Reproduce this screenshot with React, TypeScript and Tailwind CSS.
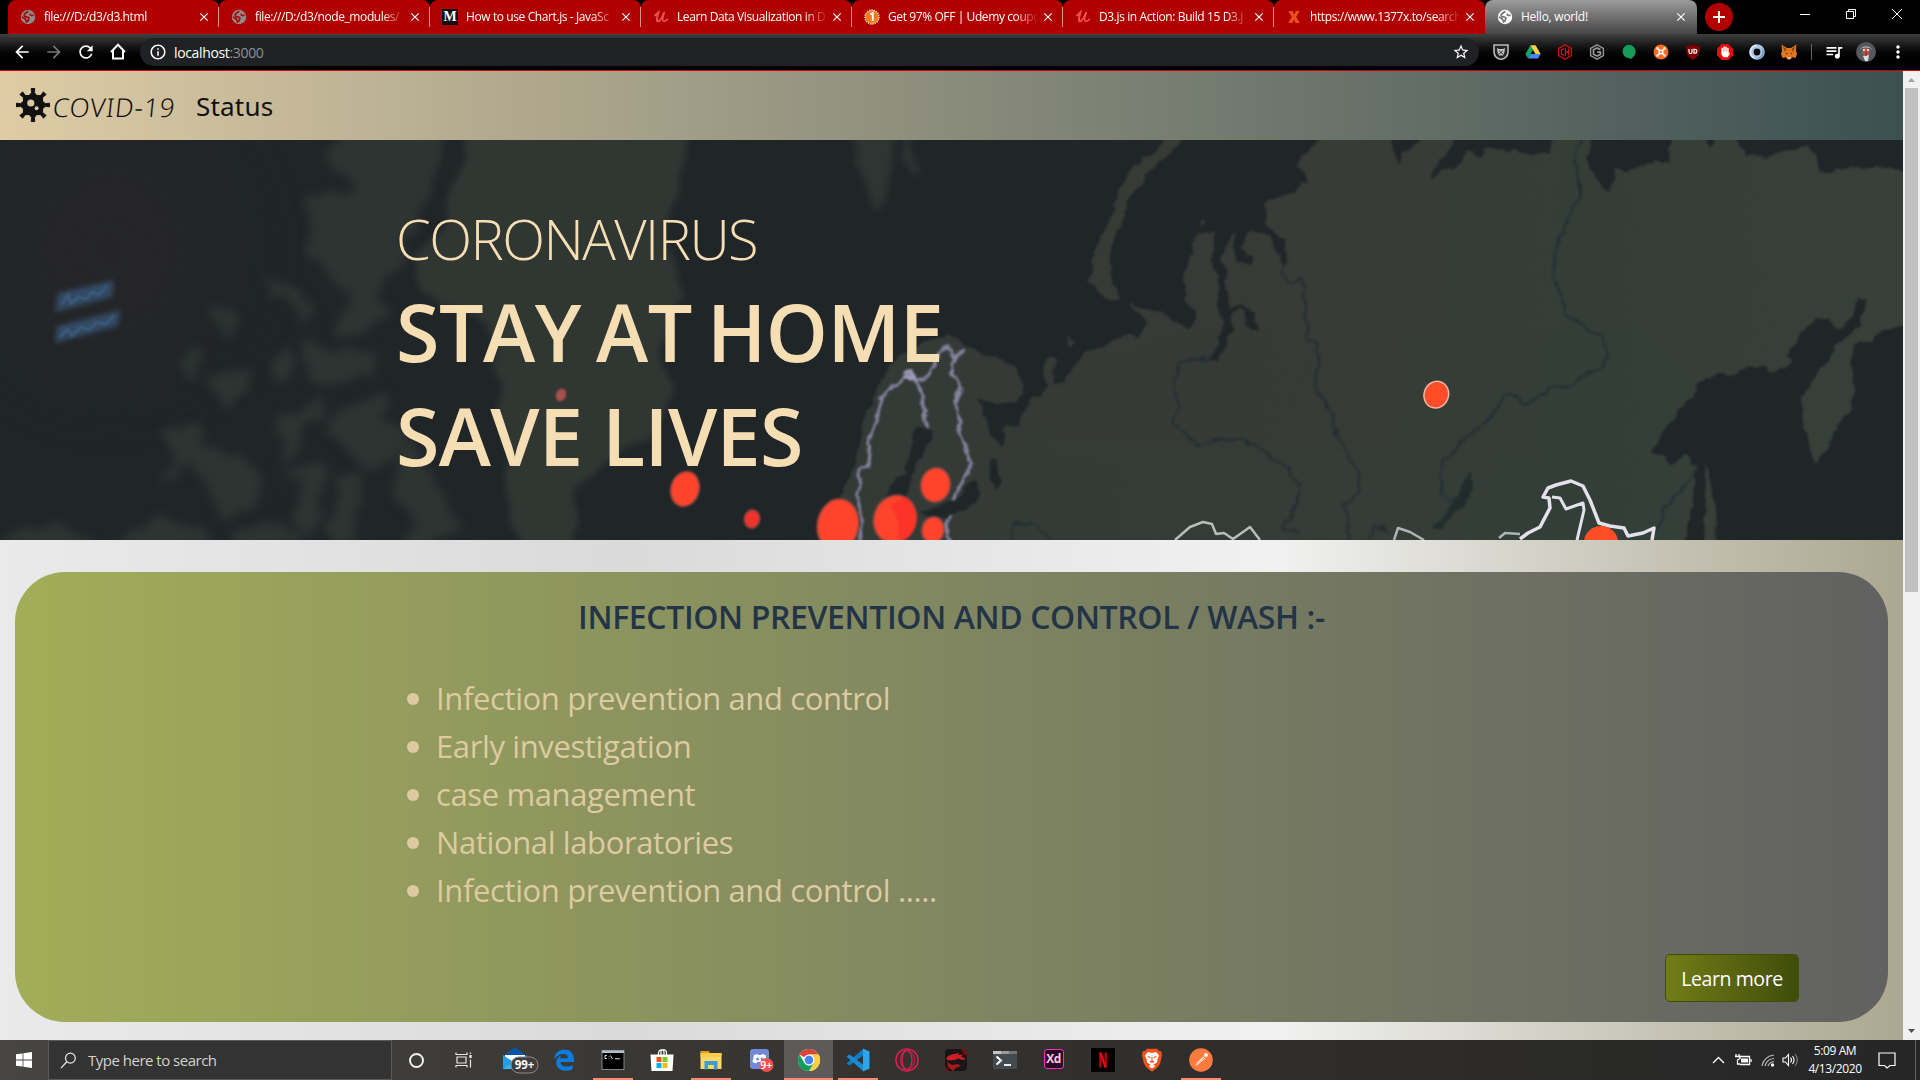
import React from "react";
import {
  MdArrowBack,
  MdArrowForward,
  MdRefresh,
  MdInfoOutline,
  MdStarBorder,
  MdQueueMusic,
  MdMoreVert,
  MdClose,
} from "react-icons/md";

/* ---------- tab strip ---------- */

function Globe({ fg, bg }: { fg: string; bg: string }) {
  return (
    <svg viewBox="0 0 16 16" className="size-4 shrink-0">
      <circle cx="8" cy="8" r="7.2" fill={fg} />
      <path
        d="M8.2 2.2 C7 3.6 4.6 4 4.2 5.8 C4 7.4 5.4 8 7 8 C8.4 8 9.2 8.8 8.8 9.8 C8.4 10.8 7.8 11.2 8 12.8 M2 7.6 C3 9.2 4.6 9.2 5.6 10.4 C6.2 11.2 6.2 12.4 6.8 13.6 M10.2 4.6 C9.8 6.2 11.4 6.8 13.6 6.4"
        fill="none"
        stroke={bg}
        strokeWidth="1.7"
      />
    </svg>
  );
}

function Medium() {
  return (
    <span className="flex size-4 shrink-0 items-center justify-center bg-[#12100e] font-['Liberation_Serif',serif] text-[14px] leading-none font-bold text-white">
      M
    </span>
  );
}

function Udemy() {
  return (
    <svg viewBox="0 0 16 16" className="size-4 shrink-0" fill="none" stroke="#ec5252" strokeLinecap="round">
      <path d="M2 6.5 C3.5 5.5 4.8 3.5 5.6 3 C5 5.4 3.6 9 4 11.6 C4.6 14 8.4 11 11 4" strokeWidth="1.9" />
      <path d="M11.2 3.6 C9.8 7.4 9 11 10.2 12 C11.4 12.8 13 11.6 14.2 10.4" strokeWidth="1.7" />
    </svg>
  );
}

function Coupon() {
  return (
    <svg viewBox="0 0 16 16" className="size-4 shrink-0">
      <circle cx="8" cy="8" r="7" fill="#f47a20" stroke="#ffe0b8" strokeWidth="1.4" strokeDasharray="1.3 1" />
      <path d="M6.3 5.6 L8.8 4 V12" fill="none" stroke="#fff" strokeWidth="1.8" />
    </svg>
  );
}

function XMark() {
  return (
    <svg viewBox="0 0 16 16" className="size-4 shrink-0">
      <path d="M2.5 2 H6.6 L8.2 5.6 L10 2 H13.6 L10.2 8 L13.8 14 H9.6 L8 10.4 L6.2 14 H2.4 L5.8 8 Z" fill="#e8501c" />
    </svg>
  );
}

const tabs: { title: string; icon: React.ReactNode }[] = [
  { title: "file:///D:/d3/d3.html", icon: <Globe fg="#8c8c8c" bg="#b10000" /> },
  { title: "file:///D:/d3/node_modules/", icon: <Globe fg="#8c8c8c" bg="#b10000" /> },
  { title: "How to use Chart.js - JavaSc", icon: <Medium /> },
  { title: "Learn Data Visualization in D", icon: <Udemy /> },
  { title: "Get 97% OFF | Udemy coupo", icon: <Coupon /> },
  { title: "D3.js in Action: Build 15 D3.j", icon: <Udemy /> },
  { title: "https://www.1377x.to/search", icon: <XMark /> },
];

function TabStrip() {
  return (
    <div className="flex h-[34px] bg-black pl-2 text-[12px] text-white">
      {tabs.map((t, i) => (
        <div
          key={i}
          className="relative flex w-[211px] shrink-0 items-center rounded-t-[8px] bg-[#b10000] pl-3"
        >
          {t.icon}
          <span className="ml-2 w-[151px] whitespace-nowrap tracking-[-0.4px] [mask-image:linear-gradient(to_right,black_84%,transparent)]">
            {t.title}
          </span>
          <MdClose className="ml-[2px] size-[14px] shrink-0" />
          {i < 6 && <span className="absolute top-[7px] right-0 h-5 w-px bg-[#dc8f8f]" />}
        </div>
      ))}
      <div className="flex w-[212px] shrink-0 items-center rounded-t-[8px] bg-linear-to-b from-[#9c9c9c] to-[#474747] pl-3">
        <Globe fg="#ffffff" bg="#707070" />
        <span className="ml-2 w-[150px] tracking-[-0.25px]">Hello, world!</span>
        <MdClose className="ml-[3px] size-[14px] shrink-0" />
      </div>
      <div className="mt-[3px] ml-2 flex size-7 items-center justify-center rounded-full bg-[#b10000]">
        <svg viewBox="0 0 12 12" className="size-3" stroke="#fff" strokeWidth="2">
          <path d="M6 0 V12 M0 6 H12" />
        </svg>
      </div>
      <svg viewBox="0 0 140 28" className="ml-auto h-7 w-[140px]" fill="none" stroke="#fff" strokeWidth="1">
        <path d="M20 14.5 H30" />
        <path d="M66.5 11.5 H73.5 V18.5 H66.5 Z M68.5 11.5 V9.5 H75.5 V16.5 H73.5" />
        <path d="M112 9 L122 19 M122 9 L112 19" />
      </svg>
    </div>
  );
}

/* ---------- toolbar ---------- */

const ext = "size-4 shrink-0";

function Extensions() {
  return (
    <div className="flex items-center gap-4">
      <svg viewBox="0 0 16 16" className={ext}>
        <path d="M1 1 H15 V8 C15 12 12 14.5 8 15.5 C4 14.5 1 12 1 8 Z" fill="#232323" stroke="#b9b9b9" strokeWidth="1.6" />
        <path d="M4 4 L6 5 H10 L12 4 L11.5 8 L10 11.5 H6 L4.5 8 Z" fill="#c4c4c4" />
        <path d="M6.2 6.8 L9.8 10 M9.8 6.8 L6.2 10" stroke="#222" />
      </svg>
      <svg viewBox="0 0 16 16" className={ext}>
        <path d="M5.4 1.2 L0.4 10 L3 14.6 L8 5.8 Z" fill="#11a861" />
        <path d="M5.4 1.2 H10.6 L15.6 10 H10.4 Z" fill="#ffcf48" />
        <path d="M5.6 10 H15.6 L13 14.6 H3 Z" fill="#4688f4" />
      </svg>
      <svg viewBox="0 0 16 16" className={ext} fill="none" stroke="#d3120d">
        <path d="M8 0.8 L14.4 4.4 V11.6 L8 15.2 L1.6 11.6 V4.4 Z" strokeWidth="1.3" />
        <path d="M7 4.6 L4.4 6 V10 L7 11.4 M8.4 4 V12 M8.4 8 H11.6 M11.6 4.4 V11.6" strokeWidth="1.3" />
      </svg>
      <svg viewBox="0 0 16 16" className={ext} fill="none" stroke="#979797">
        <path d="M8 0.8 L14.4 4.4 V11.6 L8 15.2 L1.6 11.6 V4.4 Z" strokeWidth="1.4" />
        <path d="M11.4 5.6 L8 3.9 L4.5 5.8 V10.2 L8 12 L11.4 10.4 V8.2 H8" strokeWidth="1.8" />
      </svg>
      <svg viewBox="0 0 16 16" className={ext}>
        <path d="M8 0.8 A6.6 6.6 0 0 1 14.6 7.4 C14.6 11 12 13.6 8.8 15.6 V14 A6.62 6.62 0 1 1 8 0.8Z" fill="#149d59" />
      </svg>
      <svg viewBox="0 0 16 16" className={ext}>
        <circle cx="8" cy="8" r="7.5" fill="#f36c21" />
        <path d="M4.6 4.6 L11.4 11.4 M11.4 4.6 L4.6 11.4" stroke="#fff" strokeWidth="1.6" />
        <circle cx="8" cy="8" r="2.5" fill="#fff" />
        <circle cx="8" cy="8" r="1.1" fill="#f36c21" />
        <circle cx="4.4" cy="4.4" r="1.3" fill="#ffe2cf" />
        <circle cx="11.6" cy="4.4" r="1.3" fill="#ffe2cf" />
        <circle cx="4.4" cy="11.6" r="1.3" fill="#ffe2cf" />
        <circle cx="11.6" cy="11.6" r="1.3" fill="#ffe2cf" />
      </svg>
      <svg viewBox="0 0 16 16" className={ext}>
        <path d="M8 0 C10 1.4 12.5 2 15 2 C15 9 14 13 8 16 C2 13 1 9 1 2 C3.5 2 6 1.4 8 0Z" fill="#800000" />
        <path d="M4 5 V8 A1.3 1.3 0 0 0 7 8 V5 M9 5.4 V9.2 H10 A1.9 1.9 0 0 0 10 5.4 Z" fill="none" stroke="#fff" strokeWidth="1.2" />
      </svg>
      <svg viewBox="0 0 16 16" className={ext}>
        <path d="M4.7 0 H11.3 L16 4.7 V11.3 L11.3 16 H4.7 L0 11.3 V4.7 Z" fill="#e40d0d" />
        <path
          d="M5.2 8.5 V4.5 M7.1 8 V3 M9 8 V3.2 M10.9 8.5 V4.5"
          stroke="#fff"
          strokeWidth="1.5"
          strokeLinecap="round"
        />
        <path d="M4.5 7.5 H11.6 V10 L13 8.5 L13 9.5 L10.5 13.3 H6.5 L4.5 10.5 Z" fill="#fff" />
      </svg>
      <svg viewBox="0 0 16 16" className={ext}>
        <circle cx="8" cy="8" r="5.6" fill="none" stroke="#a9c7e4" strokeWidth="4.4" />
        <path d="M8 1.5 A6.5 6.5 0 0 0 5 13.8" fill="none" stroke="#e6eff7" strokeWidth="1.6" />
        <path d="M9 14.4 A6.5 6.5 0 0 0 13.5 5" fill="none" stroke="#6d93b8" strokeWidth="1.4" />
      </svg>
      <svg viewBox="0 0 16 16" className={ext}>
        <path d="M0.6 0.6 L6 4 H10 L15.4 0.6 L15 7 L16 10 L14.5 14 L11 13.2 L9.6 15.4 H6.4 L5 13.2 L1.5 14 L0 10 L1 7 Z" fill="#e2761b" />
        <path d="M1.5 2 L5.5 5 L4 8 Z M14.5 2 L10.5 5 L12 8 Z" fill="#8f4a14" />
        <path d="M4.2 8.6 L6.5 9.6 L6 10.4 Z M11.8 8.6 L9.5 9.6 L10 10.4 Z" fill="#222" />
        <path d="M6.3 13 H9.7 L9.2 15 H6.8 Z" fill="#d7c1b3" />
      </svg>
    </div>
  );
}

function Toolbar() {
  return (
    <div className="flex h-[37px] items-center border-b border-[#c80000] bg-linear-to-b from-[#404040] to-black to-75% text-white">
      <div className="ml-[12px] flex w-[128px] items-center gap-3">
        <MdArrowBack className="size-5" />
        <MdArrowForward className="size-5 text-[#777]" />
        <MdRefresh className="size-5" />
        <svg viewBox="0 0 20 20" className="size-5" fill="none" stroke="#fff" strokeWidth="2">
          <path d="M3 10 L10 2.8 L17 10 M5 8.5 V16.5 H15 V8.5" />
        </svg>
      </div>
      <div className="flex h-7 w-[1339px] items-center rounded-full bg-[#202124] pr-[9px] pl-[9px] text-[14px]">
        <MdInfoOutline className="size-[18px]" />
        <span className="ml-[7px] tracking-[-0.35px]">
          localhost<span className="text-[#8f9296]">:3000</span>
        </span>
        <MdStarBorder className="ml-auto size-[18px]" />
      </div>
      <div className="ml-[14px]">
        <Extensions />
      </div>
      <span className="ml-[14px] h-4 w-px bg-[#666]" />
      <MdQueueMusic className="ml-[12px] size-[20px]" />
      <svg viewBox="0 0 20 20" className="ml-[12px] size-5">
        <circle cx="10" cy="10" r="10" fill="#55585c" />
        <path d="M4 8 C5 3 15 3 16 8 L14 6 H6 Z" fill="#a5abb0" />
        <ellipse cx="10" cy="10" rx="3.8" ry="4.5" fill="#a6544c" />
        <path d="M7 8 H9 M11 8 H13" stroke="#fff" strokeWidth="1.4" />
        <path d="M7 14 L9 19 H12 L13 13 Z" fill="#d9dee2" />
        <path d="M10 10 V14" stroke="#cf1d1d" strokeWidth="1.6" />
      </svg>
      <MdMoreVert className="ml-[12px] size-[20px]" />
    </div>
  );
}

/* ---------- page ---------- */

function Virus() {
  const arms = [0, 45, 90, 135, 180, 225, 270, 315];
  return (
    <svg viewBox="-18 -18 36 36" className="-mt-[2px] size-[36px]">
      {arms.map((a) => (
        <g key={a} transform={`rotate(${a})`}>
          <path
            d="M-5 -8 L-1.3 -12.500 L-1.8 -16.500 H1.8 L1.3 -12.500 L5 -8 Z"
            fill="#111"
            stroke="#111"
            strokeLinejoin="round"
          />
        </g>
      ))}
      <circle r="10.500" fill="#111" />
      <circle cx="-2.200" cy="-2" r="3.600" fill="#d8c7a0" />
      <circle cx="3.600" cy="3.200" r="2" fill="#d8c7a0" />
    </svg>
  );
}

function Navbar() {
  return (
    <nav className="flex h-[69px] items-center bg-linear-to-r from-[#dfcca5] to-[#3c5052] pl-[15px] font-['Noto_Sans','Open_Sans',sans-serif] text-[26px] text-[#111]">
      <Virus />
      <span className="mt-[4px] w-[145px] origin-bottom-left -skew-x-6 font-light tracking-[0.9px] whitespace-nowrap">
        COVID-19
      </span>
      <span className="mt-[2px] tracking-[0.200px]">Status</span>
    </nav>
  );
}

const redDots = [
  { x: 685, y: 349, rx: 14, ry: 17.5, tilt: 15 },
  { x: 752, y: 379, rx: 7.5, ry: 9, tilt: 10 },
  { x: 838, y: 385, rx: 20.5, ry: 26, tilt: 10 },
  { x: 895, y: 379, rx: 21, ry: 24, tilt: 20 },
  { x: 935.5, y: 345, rx: 14.5, ry: 17, tilt: 10 },
  { x: 933, y: 390, rx: 11, ry: 13, tilt: 10 },
];

function MapArt() {
  return (
    <svg viewBox="0 0 1903 400" className="absolute inset-0 h-full w-full">
      <defs>
        <linearGradient id="land" gradientUnits="userSpaceOnUse" x1="830" x2="1903" y1="0" y2="0">
          <stop offset="0" stopColor="#333a36" />
          <stop offset="0.300" stopColor="#373a36" />
          <stop offset="0.500" stopColor="#383b36" />
          <stop offset="0.700" stopColor="#343e37" />
          <stop offset="1" stopColor="#37413a" />
        </linearGradient>
        <linearGradient id="deep" x1="0" x2="0" y1="0" y2="1">
          <stop offset="0.100" stopColor="#30413c" stopOpacity="0" />
          <stop offset="1" stopColor="#30413c" stopOpacity="0.800" />
        </linearGradient>
        <filter id="b1" x="-20%" y="-20%" width="140%" height="140%" colorInterpolationFilters="sRGB">
          <feGaussianBlur stdDeviation="1" />
        </filter>
        <filter id="coast" x="-5%" y="-5%" width="110%" height="110%" colorInterpolationFilters="sRGB">
          <feTurbulence type="fractalNoise" baseFrequency="0.080" numOctaves="3" seed="4" result="n" />
          <feDisplacementMap in="SourceGraphic" in2="n" scale="9" xChannelSelector="R" yChannelSelector="G" />
          <feGaussianBlur stdDeviation="0.900" />
        </filter>
        <filter id="soft" x="-20%" y="-20%" width="140%" height="140%" colorInterpolationFilters="sRGB">
          <feTurbulence type="fractalNoise" baseFrequency="0.030" numOctaves="2" seed="7" result="n" />
          <feDisplacementMap in="SourceGraphic" in2="n" scale="22" xChannelSelector="R" yChannelSelector="G" />
          <feGaussianBlur stdDeviation="3.500" />
        </filter>
        <filter id="isles" x="-20%" y="-20%" width="140%" height="140%" colorInterpolationFilters="sRGB">
          <feTurbulence type="fractalNoise" baseFrequency="0.030" numOctaves="2" seed="11" result="n" />
          <feDisplacementMap in="SourceGraphic" in2="n" scale="38" xChannelSelector="R" yChannelSelector="G" />
          <feGaussianBlur stdDeviation="5" />
        </filter>
        <filter id="label" x="-20%" y="-20%" width="140%" height="140%" colorInterpolationFilters="sRGB">
          <feGaussianBlur stdDeviation="2.600" />
        </filter>
        <filter id="haze" x="-60%" y="-60%" width="220%" height="220%" colorInterpolationFilters="sRGB">
          <feGaussianBlur stdDeviation="40" />
        </filter>
      </defs>
      <rect width="1903" height="400" fill="#202528" />
      <ellipse cx="110" cy="110" rx="110" ry="120" fill="#272628" opacity="0.800" filter="url(#haze)" />

      {/* out-of-focus western islands */}
      <g filter="url(#isles)" fill="#2d3431">
        <path d="M340 -10 H455 L440 30 L420 75 L400 100 L392 165 L370 185 L355 195 L345 180 L350 150 L325 135 L312 100 L305 70 L320 55 L332 65 L345 50 L330 20 Z" />
        <path d="M255 135 L285 145 L305 150 L315 175 L300 180 L285 160 L265 160 Z" />
        <path d="M340 175 L370 170 L365 195 L335 195 Z M325 215 L370 210 L372 235 L330 245 L300 215 L305 195 Z" />
        <path d="M192 205 L205 210 L190 245 L178 240 Z M220 165 L232 170 L228 200 L218 200 Z M205 235 L245 230 L250 250 L225 270 L210 250 Z" />
        <path d="M165 285 L200 285 L200 310 L230 305 L265 345 L265 365 L230 380 L210 365 L195 335 L165 340 Z" />
        <path d="M270 215 L285 220 L285 245 L275 240 Z M275 275 L325 260 L310 290 L290 315 L270 300 Z" />
        <path d="M330 270 L385 255 L395 300 L370 330 L340 325 Z M295 320 L320 330 L325 380 L310 400 L295 380 Z" />
        <path d="M390 290 L420 300 L435 340 L460 380 L450 400 L410 400 L400 350 Z M340 335 H365 L360 375 L345 400 H330 Z" />
        <path d="M10 388 L60 384 L95 396 V410 H0 Z M125 385 L160 375 L205 382 L210 410 H110 Z M235 390 L300 385 V410 H230 Z" />
      </g>
      <g filter="url(#soft)" fill="#2f3532">
        <path
          fill="#303733"
          d="M468 -20 H685 L678 50 L668 90 L665 115 L682 145 L672 185 L660 205 L668 245 L665 275 L650 300 L625 310 L600 325 L578 360 L570 420 H522 L508 350 L506 300 L498 260 L496 215 L485 180 L440 165 L415 140 L412 120 L445 85 L445 55 L462 20 Z"
        />
        <path fill="#202528" d="M452 -15 H470 L448 60 L442 85 L425 80 L435 50 Z" />
        <path d="M852 -15 H896 L890 25 L884 62 L878 66 L868 48 L862 30 Z M903 -15 L916 15 L920 34 L912 36 L904 14 Z" />
      </g>

      {/* ocean label */}
      <g filter="url(#label)" fill="#35516f">
        <path d="M58 153 L114 140 L112 157 L55 172 Z M57 186 L120 170 L118 186 L55 203 Z" opacity="0.850" />
      </g>
      <g filter="url(#b1)" stroke="#4a73a0" strokeWidth="2.500" opacity="0.450" fill="none">
        <path d="M62 164 l6 -9 l3 9 l7 -7 l8 2 l6 -7 l7 3 l8 -10 M60 197 l7 -8 l5 7 l9 -9 l8 3 l8 -8 l9 2 l8 -9" />
      </g>

      <g filter="url(#coast)">
        {/* long northern island */}
        <path
          fill="#373b36"
          d="M1188 -10 L1166 17 L1147 33 L1136 50 L1127 63 L1124 78 L1119 90 L1112 105 L1109 123 L1112 142 L1121 156 L1114 160 L1103 157 L1097 150 L1087 143 L1091 130 L1094 112 L1100 100 L1105 85 L1113 74 L1116 55 L1123 42 L1133 30 L1143 18 L1156 13 L1170 -10 Z"
        />
        {/* mainland */}
        <path
          fill="url(#land)"
          d="M828 410 L840 360 L855 325 L862 285 L872 262 L880 240 L890 225 L905 213 L925 202 L940 197 L950 192 L969 208 L993 217 L1008 222 L1016 230 L1024 243 L1022 255 L1016 262 L997 265 L979 258 L991 273 L989 290 L993 299 L1002 303 L1006 300 L1000 287 L1004 283 L1018 288 L1022 277 L1028 260 L1033 254 L1044 258 L1046 247 L1044 225 L1050 216 L1056 220 L1052 243 L1062 245 L1066 237 L1075 225 L1087 210 L1099 208 L1116 198 L1131 192 L1137 198 L1145 183 L1141 174 L1130 165 L1143 170 L1157 170 L1172 178 L1190 190 L1196 177 L1184 160 L1185 145 L1182 137 L1192 117 L1196 93 L1214 93 L1212 123 L1218 140 L1217 163 L1224 183 L1216 205 L1210 220 L1218 222 L1226 203 L1233 188 L1230 172 L1238 168 L1246 172 L1248 188 L1257 190 L1252 172 L1242 163 L1228 168 L1226 137 L1222 117 L1232 93 L1236 120 L1252 125 L1252 117 L1240 108 L1248 93 L1262 93 L1269 97 L1277 112 L1279 120 L1286 124 L1285 100 L1277 93 L1267 87 L1265 63 L1285 54 L1307 43 L1303 30 L1297 27 L1303 16 L1320 0 V-10 H1392 V0 L1394 14 L1399 24 L1401 13 L1412 8 L1420 0 V-10 H1455 V0 L1445 15 L1433 30 L1431 40 L1445 30 L1459 24 L1466 10 L1482 16 L1484 9 L1518 11 L1530 15 L1550 13 L1552 0 V-10 H1590 V0 L1588 24 L1596 38 L1607 52 L1612 45 L1617 30 L1625 33 L1640 26 L1653 22 L1671 23 L1669 10 L1673 0 V-10 H1706 V0 L1710 8 L1716 0 V-10 H1736 V0 L1748 14 L1766 17 L1786 10 L1808 6 L1816 17 L1820 32 L1840 30 L1863 27 L1880 28 L1915 34 V186 L1891 187 L1874 199 L1856 203 L1850 223 L1855 243 L1850 270 L1838 284 L1830 305 L1816 325 L1808 305 L1804 283 L1802 257 L1812 243 L1824 226 L1836 207 L1848 196 L1860 187 L1863 168 L1869 160 L1858 159 L1853 175 L1840 190 L1835 188 L1832 178 L1818 179 L1808 185 L1794 202 L1787 215 L1792 224 L1772 232 L1768 225 L1752 225 L1746 231 L1705 238 L1680 270 L1651 312 L1660 314 L1669 325 L1676 322 L1685 315 L1697 327 L1694 350 L1691 373 L1681 410 Z"
        />
        <path fill="#373f38" d="M1703 320 L1710 345 L1717 367 L1714 410 H1706 L1704 360 Z" />
        <path fill="#373b36" d="M1070 195 l5 8 l-4 6 l-4 -4 Z M1131 163 l9 7 l-3 2 l-8 -6 Z M1202 80 l5 1 l-3 6 l-4 -2 Z" />
        {/* seas and lakes */}
        <g fill="#1f2628">
          <path d="M979 258 L997 266 L1018 262 L1030 255 L1022 277 L1020 287 L1004 283 L1001 288 L1007 300 L1002 304 L991 298 L988 280 Z" />
          <path d="M915 290 L922 287 L932 290 L930 303 L920 318 L912 335 L908 352 L900 368 L885 364 L890 348 L903 332 L909 315 Z" />
          <path d="M920 372 L945 362 L962 358 L965 345 L975 340 L981 352 L975 364 L960 370 L948 378 L930 378 Z" />
          <path d="M989 320 L997 322 L1000 345 L996 349 L989 338 Z" />
          <path d="M1471 330 L1472 348 L1464 366 L1452 378 L1440 390 L1432 388 L1446 374 L1456 358 Z" />
        </g>
      </g>
      <path
        fill="url(#deep)"
        filter="url(#b1)"
        d="M985 410 L1010 310 L1070 260 L1150 200 L1300 160 H1600 L1690 245 L1645 312 L1680 340 L1675 410 Z"
        opacity="0.350"
      />

      {/* dark inner borders */}
      <g fill="none" stroke="#202a32" strokeWidth="2" opacity="0.850" strokeLinejoin="round" filter="url(#coast)">
        <path d="M1281 122 L1281 134 L1292 143 L1300 138 L1303 150 L1305 175 L1308 197 L1317 207 L1319 222 L1317 250 L1326 262 L1334 280 L1336 293 L1350 317 L1359 335 L1359 350 L1350 362 L1343 367 L1348 380 L1349 405" />
        <path d="M1582 -5 L1574 18 L1580 45 L1580 60 L1573 66 L1568 82 L1560 97 L1557 115 L1554 128 L1557 145 L1563 163 L1569 175 L1580 184 L1591 192 L1602 194 L1606 205 L1608 216 L1604 227 L1585 235 L1570 245 L1548 249 L1536 257 L1526 266 L1516 257 L1505 255 L1497 268 L1486 282 L1466 297 L1450 318 L1442 323 L1441 350 L1447 360 L1458 357" />
        <path d="M1210 220 L1192 218 L1180 224 L1174 245 L1178 265 L1174 282 L1186 295 L1196 307 L1215 300 L1238 298 L1256 305 L1270 315 L1286 327 L1300 343 L1298 360 L1290 378 L1282 388 L1300 394" />
        <path d="M1697 330 L1686 345 L1668 365 L1655 390 M1012 398 L1015 384 L1040 386 L1050 400 M1368 400 L1374 386 L1390 390" />
      </g>

      {/* lit borders */}
      <g fill="none" strokeLinejoin="round" filter="url(#coast)">
        <path
          d="M860 405 L861 380 L857 352 L860 330 L868 325 L870 300 L874 285 L881 262 L884 255 L893 246 L904 240 L912 238 L930 238 L935 225 L938 215 L944 207 L952 211 L955 215 L966 210 M960 212 L953 225 L952 235 L961 248 L955 262 L960 290 L964 308 L972 323 L962 342 L952 360 M904 232 L915 240 L922 255 L924 275 L928 287 M950 405 L947 385 L952 375"
          stroke="#8583a0"
          strokeWidth="3.200"
        />
        <path d="M903 235 L910 230 L914 238 L906 239" stroke="#9f9cba" strokeWidth="4" />
      </g>
      <g fill="none" stroke="#e4e1ea" strokeLinejoin="round">
        <path d="M1175 400 L1190 387 L1203 382 L1212 384 L1216 394 L1224 393 L1233 399 L1250 387 L1260 400" stroke="#b9bdb9" strokeWidth="2.500" />
        <path d="M1394 400 L1398 388 L1410 392 L1424 400 M1499 398 L1505 393 L1520 394" stroke="#aeb3b5" strokeWidth="2.500" />
        <path d="M1520 399 L1528 393 L1540 387 L1550 368 L1549 358 L1543 357 L1548 348 L1556 345 L1571 341 L1583 346 L1590 360 L1599 383 L1610 386 L1624 388 L1628 396 L1643 393 L1654 388 L1652 400" strokeWidth="3.500" />
        <path d="M1552 357 L1560 358 L1566 369 L1583 363 L1584 370 L1577 400" strokeWidth="3" />
      </g>

      {/* outbreak markers */}
      <g filter="url(#b1)">
        <ellipse cx="561" cy="255" rx="5" ry="6.500" fill="#a8504c" transform="rotate(20 561 255)" />
        {redDots.map((d, i) => (
          <ellipse
            key={i}
            cx={d.x}
            cy={d.y}
            rx={d.rx}
            ry={d.ry}
            fill={i === 1 ? "#f0322c" : "#ff442b"}
            stroke="#a34a44"
            strokeWidth="1.500"
            transform={`rotate(${d.tilt} ${d.x} ${d.y})`}
          />
        ))}
        <path d="M905 357 C925 372 916 400 898 402 C900 390 898 375 890 366 Z" fill="#fb3328" />
      </g>
      <ellipse cx="1436.500" cy="254.500" rx="12.200" ry="13.500" fill="#ff4d29" stroke="#f0b5a4" strokeWidth="1.500" transform="rotate(20 1436 254)" />
      <ellipse cx="1601" cy="402" rx="17" ry="16" fill="#ff4d26" />
    </svg>
  );
}

function Hero() {
  return (
    <section className="relative h-[400px] overflow-hidden bg-[#202528]">
      <MapArt />
      <div className="relative pt-[56px] pl-[396px] font-['Open_Sans',sans-serif] whitespace-nowrap text-[#f5deb3]">
        <p className="text-[56px] leading-[84px] font-light tracking-[-1.550px]">CORONAVIRUS</p>
        <p className="text-[79px] leading-[104px] font-semibold tracking-[-0.500px] [word-spacing:-5px]">STAY AT HOME</p>
        <p className="text-[79px] leading-[104px] font-semibold tracking-[-0.650px]">SAVE LIVES</p>
      </div>
    </section>
  );
}

const measures = [
  "Infection prevention and control",
  "Early investigation",
  "case management",
  "National laboratories",
  "Infection prevention and control .....",
];

function InfoCard() {
  return (
    <section className="h-[500px] px-[15px] pt-8 [background-image:linear-gradient(to_right,#eaeaea,#dadada_33%,#f1f1f1_67%,#aba790)]">
      <div className="flex h-[450px] flex-col rounded-[50px] bg-linear-to-r from-[#a2ad58] to-[#616161] font-['Open_Sans',sans-serif]">
        <h2 className="pt-[21px] text-center text-[32px] leading-[48px] font-semibold tracking-[-0.380px] text-[#243447]">
          INFECTION PREVENTION AND CONTROL / WASH :-
        </h2>
        <ul className="mt-[33px] pl-[392px] text-[31px] leading-[48px] tracking-[-0.380px] text-[#decaa2]">
          {measures.map((m) => (
            <li key={m} className="flex items-center whitespace-nowrap">
              <span className="mt-[1px] mr-[17px] size-3 rounded-full bg-[#decaa2]" />
              {m}
            </li>
          ))}
        </ul>
        <button className="mt-[40px] mr-[89px] h-12 w-[134px] self-end rounded-[5px] border border-[#404d0a] bg-linear-to-r from-[#737d17] to-[#404d0a] pt-[2px] text-[19.500px] tracking-[-0.400px] text-white">
          Learn more
        </button>
      </div>
    </section>
  );
}

function Scrollbar() {
  return (
    <div className="flex w-[17px] flex-col items-center justify-between bg-[#f1f1f1]">
      <div className="flex flex-col items-center">
        <svg viewBox="0 0 17 17" className="size-[17px]">
          <path d="M8.5 7 L12 11 H5 Z" fill="#a3a3a3" />
        </svg>
        <div className="h-[504px] w-[13px] bg-[#c1c1c1]" />
      </div>
      <svg viewBox="0 0 17 17" className="size-[17px]">
        <path d="M5 6 H12 L8.5 10 Z" fill="#505050" />
      </svg>
    </div>
  );
}

/* ---------- taskbar ---------- */

const app = "h-6 w-6";

function Mail() {
  return (
    <svg viewBox="0 0 40 30" className="h-[30px] w-10">
      <path d="M4 11 L16 2 L28 11 V13 H4 Z" fill="#0b55a5" />
      <path d="M6 10 H26 V16 L16 19 L6 16 Z" fill="#fff" />
      <path d="M4 10 L16 18 L28 10 V24 H4 Z" fill="#1f9fe5" />
      <path d="M6 10 H26 L16 17.500 Z" fill="#fff" />
      <path d="M4 24 L16 16 L28 24 Z" fill="#35b5f2" />
      <rect x="12" y="12" width="27" height="16" rx="8" fill="#3e3d3a" stroke="#8b8a88" />
      <text x="25.500" y="24" textAnchor="middle" fontSize="11.500" fontWeight="700" fill="#fff" fontFamily="Open Sans, sans-serif">
        99+
      </text>
    </svg>
  );
}
function Edge() {
  return (
    <svg viewBox="0 0 24 24" className={app}>
      <path
        d="M2 11.5 C2.5 5 7 1.5 12.5 1.5 C19 1.5 22 6.5 22 11.5 V14 H8.5 C8.8 17.5 11.5 18.6 14.5 18.6 C17 18.6 19 18 20.5 17 V21.2 C18.5 22.3 16 22.8 13.5 22.8 C7.5 22.8 4.2 19 4.2 14.8 C4.2 11.5 6 9 9 7.6 C8.5 8.6 8.2 9.4 8.2 10.2 H15.8 C15.8 7.5 14.5 6 11.5 6 C8 6 4.5 8 2 11.5 Z"
        fill="#0f7bdc"
      />
    </svg>
  );
}
function Cmd() {
  return (
    <svg viewBox="0 0 24 24" className={app}>
      <rect x="1" y="2.5" width="22" height="19" fill="#000" stroke="#7f8690" />
      <rect x="1" y="2.5" width="22" height="2.5" fill="#b5bcc4" />
      <path d="M6 7.5 H4 V10.5 H6 M8 8 V8.5 M8 10 V10.5 M9.5 7.5 L11.5 11 M14 10.8 H19" stroke="#ddd" fill="none" />
    </svg>
  );
}
function Store() {
  return (
    <svg viewBox="0 0 24 24" className={app}>
      <path d="M8.5 7 V4.5 A3 3.5 0 0 1 14 3.5 V7 M11 7 V3 A3 3 0 0 1 16.5 4 V7" fill="none" stroke="#fff" strokeWidth="1.2" />
      <path d="M0.5 6.5 H23.5 L22.5 23 H1.5 Z" fill="#fff" />
      <path d="M6.5 9 H11.5 V14 H6.5Z" fill="#f1511b" />
      <path d="M12.5 9 H17.5 V14 H12.5Z" fill="#80cc28" />
      <path d="M6.5 15 H11.5 V20 H6.5Z" fill="#00adef" />
      <path d="M12.5 15 H17.5 V20 H12.5Z" fill="#fbbc09" />
    </svg>
  );
}
function Explorer() {
  return (
    <svg viewBox="0 0 24 24" className={app}>
      <path d="M1.5 3 H9.5 L11 5 H1.5 Z" fill="#e59c0d" />
      <path d="M1.5 5 H22.5 V21 H1.5 Z" fill="#ffd766" />
      <path d="M1.5 5 H22.5 V9 H1.5 Z" fill="#fbc94b" />
      <path d="M5.5 13 H18.5 V21.5 H15 V17 H9 V21.5 H5.5 Z" fill="#3e9ad9" />
    </svg>
  );
}
function Discord() {
  return (
    <svg viewBox="0 0 28 26" className="h-[26px] w-7">
      <rect x="4" y="2" width="19" height="20" rx="3" fill="#7289da" />
      <path d="M8 8 L11.5 7 L12 8 H15.5 L16 7 L19.5 8 L21 15 L17.5 16.5 L16.5 15 H11 L10 16.5 L6.5 15 Z" fill="#fff" />
      <ellipse cx="11.5" cy="12" rx="1.4" ry="1.6" fill="#7289da" />
      <ellipse cx="16" cy="12" rx="1.4" ry="1.6" fill="#7289da" />
      <circle cx="20.5" cy="18" r="7" fill="#f04f50" />
      <text x="20.300" y="21.800" textAnchor="middle" fontSize="10.500" fontWeight="600" fill="#fff" fontFamily="Open Sans, sans-serif">
        9+
      </text>
    </svg>
  );
}
function Chrome() {
  return (
    <svg viewBox="0 0 24 24" className={app}>
      <circle cx="12" cy="12" r="11" fill="#fff" />
      <path d="M12 1 A11 11 0 0 1 21.53 6.5 H12 A5.5 5.5 0 0 0 7.2 9.2 L2.47 6.5 A11 11 0 0 1 12 1" fill="#db4437" />
      <path d="M21.53 6.5 A11 11 0 0 1 12 23 L16.76 14.75 A5.5 5.5 0 0 0 12 6.5 Z" fill="#ffcd40" />
      <path d="M12 23 A11 11 0 0 1 2.47 6.5 L7.24 14.75 A5.5 5.5 0 0 0 16.76 14.75 Z" fill="#0f9d58" />
      <circle cx="12" cy="12" r="5.4" fill="#f1f1f1" />
      <circle cx="12" cy="12" r="4.2" fill="#4285f4" />
    </svg>
  );
}
function Code() {
  return (
    <svg viewBox="0 0 24 24" className={app}>
      <path d="M17 1 V7.5 L3.5 17.5 L0.5 15.5 Z" fill="#0f7dc9" />
      <path d="M17 23 V16.5 L3.5 6.5 L0.5 8.5 Z" fill="#1a8ad6" />
      <path d="M17 0.5 L23.5 3.5 V20.5 L17 23.5 Z" fill="#2aa5ee" />
    </svg>
  );
}
function Opera() {
  return (
    <svg viewBox="0 0 24 24" className={app} fill="none" stroke="#d81e4e">
      <circle cx="12" cy="12" r="11" strokeWidth="1.6" />
      <ellipse cx="12" cy="12" rx="5" ry="9.5" strokeWidth="1.4" />
      <path d="M12 2.5 C3.500 2.500 3.500 21.500 12 21.500" strokeWidth="1" />
      <path d="M12 2.500 C22 3 22 21 12 21.500" strokeWidth="1" />
    </svg>
  );
}
function Dragon() {
  return (
    <svg viewBox="0 0 24 24" className={app}>
      <rect x="1" y="1" width="22" height="22" rx="4" fill="#181516" />
      <path d="M17 1 C20 0 23 2 23 5 L22 9 Z M1 18 L5 23 L1.5 23 Z" fill="#7c0f13" />
      <path d="M2 11 C5 5 11 7 15 4.5 L14 7 L19 6.5 L17 8.5 L22 11 L19 12 L14 10.5 L11 12 L5 12.500 Z" fill="#cf1f24" />
      <path d="M3 14 L8 17 L14 16 L17 18 L12 20 L9 23 L4 19 Z" fill="#a5181c" />
    </svg>
  );
}
function Terminal() {
  return (
    <svg viewBox="0 0 24 24" className={app}>
      <rect y="3" width="24" height="18" fill="#454a50" />
      <path d="M0 3 H8 V6 H0Z" fill="#c4c4c4" />
      <path d="M8 3 H16 V6 H8Z" fill="#9a9a9a" />
      <path d="M16 3 H24 V6 H16Z" fill="#757575" />
      <path d="M3.5 8.5 L8 12.5 L3.5 16.5" stroke="#fff" strokeWidth="2" fill="none" />
      <path d="M11 17 H18" stroke="#fff" strokeWidth="1.8" />
    </svg>
  );
}
function Xd() {
  return (
    <span className="-mt-[3px] flex h-5 w-5 items-center justify-center rounded-[3px] border border-[#ff2bc2] bg-[#2c0622] font-['Open_Sans',sans-serif] text-[12px] leading-none font-bold tracking-[-0.500px] text-[#ffc9f0]">
      Xd
    </span>
  );
}
function Netflix() {
  return (
    <svg viewBox="0 0 24 24" className={app}>
      <rect width="24" height="24" fill="#000" />
      <path d="M9.300 4.500 V19.500 M14.700 4.500 V19.500" stroke="#b0060f" strokeWidth="2.400" />
      <path d="M8.100 4.500 H10.600 L15.900 19.500 H13.400 Z" fill="#e50914" />
    </svg>
  );
}
function Brave() {
  return (
    <svg viewBox="0 0 24 24" className={app}>
      <path d="M7 0.8 H17 L19 3 L21.5 3.5 L22 7 L20.5 14 C19.5 18.5 16 21 12 23.5 C8 21 4.5 18.5 3.5 14 L2 7 L2.5 3.5 L5 3 Z" fill="#f4511e" />
      <path d="M8 4 L12 5 L16 4 L19 7.5 L17.5 11 L17 14.5 L13.5 16.5 L15 18.5 L12 20.5 L9 18.5 L10.5 16.5 L7 14.5 L6.5 11 L5 7.5 Z" fill="#fff" />
      <path d="M7.5 8.5 L10.5 9.5 M16.5 8.5 L13.5 9.5 M12 9 V14 M10 13 L12 14.5 L14 13" stroke="#f4511e" strokeWidth="1.1" fill="none" />
    </svg>
  );
}
function Postman() {
  return (
    <svg viewBox="0 0 24 24" className={app}>
      <circle cx="12" cy="12" r="11.8" fill="#fd7a3e" />
      <path d="M5.500 18.500 L8 14.500 L14.500 8.500 L16.200 10.200 L9.500 16.300 Z" fill="#fff" />
      <path d="M5.500 18.500 L15.500 9.500" stroke="#fd7a3e" strokeWidth="0.800" />
      <circle cx="17" cy="7" r="1.900" fill="#fff" />
    </svg>
  );
}

const apps: { icon: React.ReactNode; state?: "open" | "active" }[] = [
  { icon: <Edge /> },
  { icon: <Cmd />, state: "open" },
  { icon: <Store /> },
  { icon: <Explorer />, state: "open" },
  { icon: <Discord /> },
  { icon: <Chrome />, state: "active" },
  { icon: <Code />, state: "open" },
  { icon: <Opera /> },
  { icon: <Dragon /> },
  { icon: <Terminal /> },
  { icon: <Xd /> },
  { icon: <Netflix /> },
  { icon: <Brave /> },
  { icon: <Postman />, state: "open" },
];

function Taskbar() {
  return (
    <footer className="flex h-10 items-stretch bg-linear-to-r from-[#474541] via-[#33312e] via-50% to-[#262626] text-white">
      <div className="flex w-[48px] items-center justify-center">
        <svg viewBox="0 0 16 16" className="size-4" fill="#fff">
          <path d="M0 2.3 L6.6 1.4 V7.6 H0Z M7.4 1.3 L16 0 V7.6 H7.4Z M0 8.4 H6.6 V14.6 L0 13.7Z M7.4 8.4 H16 V16 L7.4 14.7Z" />
        </svg>
      </div>
      <div className="flex w-[344px] items-center border border-[#5a5a5a] bg-[#333] pl-[11px]">
        <svg viewBox="0 0 18 18" className="size-[17px]" fill="none" stroke="#e8e8e8" strokeWidth="1.3">
          <circle cx="11" cy="6.5" r="5.2" />
          <path d="M7.2 10.3 L1 17" />
        </svg>
        <span className="ml-[11px] text-[15px] tracking-[-0.500px] text-[#d2d2d2]">Type here to search</span>
      </div>
      <div className="flex w-12 items-center justify-center">
        <span className="size-[15px] rounded-full border-2 border-[#f0f0f0]" />
      </div>
      <div className="flex w-[47px] items-center justify-center">
        <svg viewBox="0 0 18 16" className="h-4 w-[18px]" fill="none" stroke="#e8e8e8" strokeWidth="1.2">
          <path d="M1 0.5 V2.5 H12 V0.5 M2 5 H11 V11 H2 Z M1 15.5 V13.5 H12 V15.5 M15.5 0.5 V2 M15.5 7.5 V15.5" />
          <path d="M15.5 3 V6" strokeWidth="2.4" />
        </svg>
      </div>
      <div className="flex w-[52px] items-center justify-end">
        <Mail />
      </div>
      {apps.map((a, i) => (
        <div
          key={i}
          className={
            a.state === "active"
              ? "relative flex w-[49px] items-center justify-center bg-[#5c5b59]"
              : "relative flex w-[49px] items-center justify-center"
          }
        >
          {a.icon}
          {a.state === "open" && <span className="absolute bottom-0 left-[5px] h-[2px] w-10 bg-[#fd8a70]" />}
          {a.state === "active" && <span className="absolute bottom-0 left-0 h-[2px] w-full bg-[#fd8a70]" />}
        </div>
      ))}
      <div className="ml-auto flex items-center">
        <svg viewBox="0 0 92 20" className="mr-[-2px] h-5 w-[92px]" fill="none" stroke="#fff" strokeWidth="1.3">
          <path d="M4 13 L9.5 7.5 L15 13" />
          <path d="M31 6.5 H40.500 V14.500 H31" />
          <path d="M32 8.500 H39 V12.500 H32 Z" fill="#fff" stroke="none" />
          <path d="M42 9 V12" />
          <path d="M27 4 V6 M30 4 V6 M26 6.500 H31 V8.500 L28.500 10 V14 H31" />
          <path d="M53 16 A13 13 0 0 1 65 5 M56 16 A10 10 0 0 1 65 8.5 M59 16 A7 7 0 0 1 65 11.5" stroke="#b8b8b8" strokeWidth="1.2" />
          <circle cx="63.5" cy="15" r="1.7" fill="#fff" stroke="none" />
          <path d="M74 8 H76.5 L79.5 4.5 V15.5 L76.5 12 H74 Z" strokeWidth="1.1" />
          <path d="M81.5 7.5 A4 4 0 0 1 81.5 12.5 M83.5 6 A6.5 6.5 0 0 1 83.5 14" strokeWidth="1.1" />
          <path d="M86 4 A9 9 0 0 1 86 16" stroke="#888" strokeWidth="1.1" />
        </svg>
        <div className="w-[72px] text-center text-[12px] leading-[18px] tracking-[-0.4px]">
          <div>5:09 AM</div>
          <div>4/13/2020</div>
        </div>
        <svg viewBox="0 0 18 18" className="ml-[7px] size-[18px]" fill="none" stroke="#fff" strokeWidth="1.2">
          <path d="M1 2 H17 V14.5 H12 L9 17 L6.5 14.5 H1 Z" />
        </svg>
        <span className="mr-1 ml-[19px] h-10 w-px bg-[#666]" />
      </div>
    </footer>
  );
}

export default function App() {
  return (
    <div className="flex h-[1080px] w-[1920px] flex-col overflow-hidden bg-black font-['Open_Sans','Noto_Sans',sans-serif]">
      <TabStrip />
      <Toolbar />
      <div className="flex h-[969px]">
        <main className="w-[1903px]">
          <Navbar />
          <Hero />
          <InfoCard />
        </main>
        <Scrollbar />
      </div>
      <Taskbar />
    </div>
  );
}
